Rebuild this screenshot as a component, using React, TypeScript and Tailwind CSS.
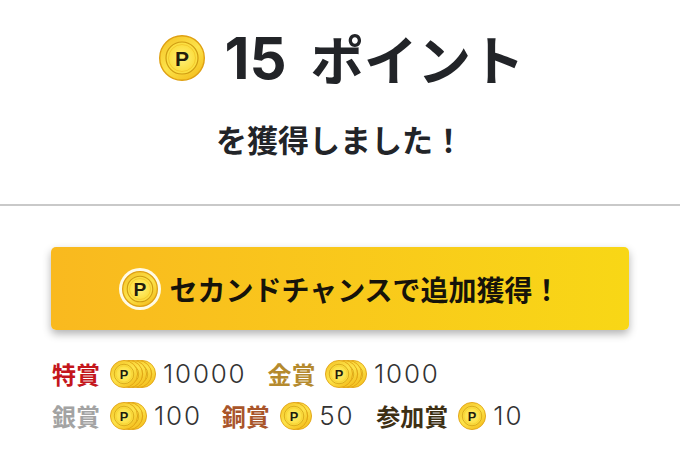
const jp = { fontFamily: '"Noto Sans CJK JP", "Noto Sans", sans-serif' };

// single gold point coin
const Coin = ({ size, ring = false, mark = true }: { size: number; ring?: boolean; mark?: boolean }) => (
  <svg width={size} height={size} viewBox="0 0 46 46" className="shrink-0 block">
    <defs>
      <linearGradient id="coinGold" x1="0.15" y1="0" x2="0.85" y2="1">
        <stop offset="0" stopColor="#f4c428" />
        <stop offset="0.5" stopColor="#fde34a" />
        <stop offset="1" stopColor="#f3bc1a" />
      </linearGradient>
      <radialGradient id="coinFace" cx="0.5" cy="0.5" r="0.55">
        <stop offset="0" stopColor="#fff07a" />
        <stop offset="1" stopColor="#fbdc38" />
      </radialGradient>
    </defs>
    {ring && <circle cx="23" cy="23" r="23" fill="#fffbe6" />}
    <circle cx="23" cy="23" r={ring ? 19 : 22.3} fill="url(#coinGold)" stroke="#dfa012" strokeWidth="1.4" />
    <circle cx="23" cy="23" r={ring ? 14 : 16} fill="#fbdf42" stroke="#cf9c12" strokeWidth="1.2" />
    <circle cx="23" cy="23" r={ring ? 11.5 : 13.5} fill="url(#coinFace)" stroke="#f2c42a" strokeWidth="0.8" />
    {mark && (
      <text x="23" y="30.5" textAnchor="middle" fontSize="21" fontWeight="700" fill="#221c0c" fontFamily="Liberation Sans, sans-serif">P</text>
    )}
  </svg>
);

// stacked coins, front one on the left
const CoinStack = ({ count }: { count: number }) => (
  <div className="flex flex-row-reverse shrink-0">
    {Array.from({ length: count }).map((_, i) => (
      <div key={i} className={i === count - 1 ? 'relative' : 'relative -ml-[23.5px]'}>
        <Coin size={28} mark={i === count - 1} />
      </div>
    ))}
  </div>
);

const Prize = ({ label, color, coins, value, className = '' }: { label: string; color: string; coins: number; value: string; className?: string }) => (
  <div className={`flex items-center ${className}`}>
    <span className={`text-[24px] leading-none font-bold ${color}`} style={jp}>{label}</span>
    <div className="ml-[10px]"><CoinStack count={coins} /></div>
    <span className="ml-[7px] text-[26px] leading-none text-[#333] tracking-[1.8px]" style={{ fontFamily: 'Inter, sans-serif', fontWeight: 300 }}>{value}</span>
  </div>
);

export default function App() {
  return (
    <div className="w-[680px] h-[450px] bg-white overflow-hidden text-[#222428]" style={jp}>
      <div className="h-[206px] border-b-2 border-[#c9c9c9] flex flex-col items-center">
        <div className="flex items-center h-[58px] mt-[29px] pl-[4px]">
          <Coin size={46} />
          <span className="ml-[19px] text-[58px] leading-none font-bold" style={{ fontFamily: 'Inter, sans-serif' }}>15</span>
          <span className="ml-[24px] text-[53.5px] leading-none font-bold">ポイント</span>
        </div>
        <div className="mt-[36px] text-[31px] leading-none font-bold">を獲得しました！</div>
      </div>
      <div className="px-[51px] pt-[41px]">
        <div className="h-[83px] rounded-[5px] flex items-center justify-center bg-gradient-to-r from-[#f9b91f] to-[#f8d716] shadow-[0_4px_8px_rgba(0,0,0,0.3)]">
          <Coin size={42} ring />
          <span className="ml-[8px] text-[28px] leading-none font-bold text-[#16130a]">セカンドチャンスで追加獲得！</span>
        </div>
        <div className="mt-[29px] flex flex-col gap-[12px] pl-[1px]">
          <div className="flex items-center h-[30px]">
            <Prize label="特賞" color="text-[#c4161c]" coins={5} value="10000" />
            <Prize label="金賞" color="text-[#b58a2e]" coins={4} value="1000" className="ml-[21px]" />
          </div>
          <div className="flex items-center h-[30px]">
            <Prize label="銀賞" color="text-[#a3a3a3]" coins={3} value="100" />
            <Prize label="銅賞" color="text-[#a9552a]" coins={2} value="50" className="ml-[20px]" />
            <Prize label="参加賞" color="text-[#3d2f14]" coins={1} value="10" className="ml-[22px]" />
          </div>
        </div>
      </div>
    </div>
  );
}
